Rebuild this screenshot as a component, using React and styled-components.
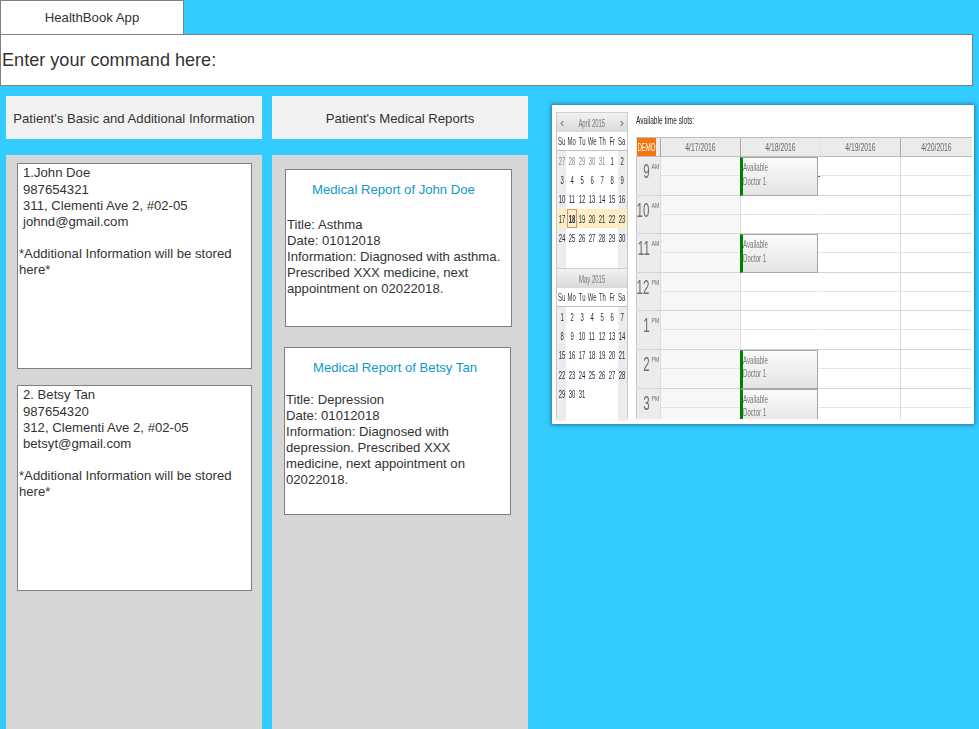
import React from 'react';
import styled, { createGlobalStyle } from 'styled-components';

const GlobalStyle = createGlobalStyle`
  html, body {
    margin: 0;
    height: 729px;
    overflow: hidden;
    background: #33ccff;
    font-family: "Liberation Sans", Arial, sans-serif;
    color: #333333;
  }
`;

const Page = styled.div`
  display: flex;
  flex-direction: column;
  height: 729px;
`;
const Tab = styled.div`
  width: 182px;
  height: 33px;
  background: #fff;
  border: 1px solid #7f7f7f;
  border-bottom: none;
  display: flex;
  align-items: center;
  justify-content: center;
  font-size: 13.2px;
`;
const CommandBar = styled.div`
  width: 970px;
  height: 50px;
  background: #fff;
  border: 1px solid #7f7f7f;
  display: flex;
  align-items: center;
  padding-left: 1px;
  font-size: 18.1px;
`;
const Main = styled.div`
  flex: 1;
  display: flex;
  padding: 10px 0 0 6px;
  min-height: 0;
`;
const Column = styled.div`
  width: 256px;
  margin-right: 10px;
  display: flex;
  flex-direction: column;
  gap: 16px;
`;
const ColumnHeader = styled.div`
  height: 42px;
  padding-top: 1px;
  background: #f2f2f2;
  display: flex;
  align-items: center;
  justify-content: center;
  font-size: 13.15px;
`;
const ColumnBody = styled.div`
  flex: 1;
  background: #d6d6d6;
  display: flex;
  flex-direction: column;
  padding: ${(p) => p.$pad};
  gap: ${(p) => p.$gap}px;
`;
const PatientCard = styled.div`
  width: 233px;
  height: 204px;
  background: #fff;
  border: 1px solid #7f7f7f;
  font-size: 13.15px;
  line-height: 16px;
`;
const Indented = styled.div`
  padding: 1px 0 0 5px;
`;
const NameLine = styled.div`
  margin-bottom: ${(p) => (p.$first ? 1 : 0)}px;
`;
const Note = styled.div`
  margin-top: 16px;
  padding-left: 1px;
`;
const ReportCard = styled.div`
  width: 224px;
  height: ${(p) => p.$height}px;
  margin-left: ${(p) => p.$shift}px;
  background: #fff;
  border: 1px solid #7f7f7f;
  font-size: 13.15px;
  line-height: 16px;
  padding-left: 1px;
`;
const ReportTitle = styled.div`
  color: #0e9ac8;
  height: 39px;
  padding-right: ${(p) => p.$inset}px;
  display: flex;
  align-items: center;
  justify-content: center;
`;
const ReportBody = styled.div`
  margin-top: ${(p) => p.$top}px;
`;

const Shot = styled.div`
  width: 422px;
  height: 319px;
  margin: 9px 0 0 14px;
  background: #fff;
  box-shadow: 0 0 4px 1px rgba(40, 90, 120, 0.75);
  display: flex;
  padding: 7px 0 0 4px;
  box-sizing: border-box;
  overflow: hidden;
  filter: blur(0.3px);
`;
const Nav = styled.div`
  width: 72px;
  height: 307px;
  box-sizing: border-box;
  border-left: 1px solid #c8c8c8;
  border-right: 1px solid #c8c8c8;
  display: flex;
  flex-direction: column;
`;
const NavTitle = styled.div`
  height: 20px;
  flex: none;
  background: linear-gradient(#f2f2f2, #d9d9d9);
  border-top: 1px solid #cfcfcf;
  box-sizing: border-box;
  display: flex;
  align-items: center;
  justify-content: center;
  color: #777;
  font-size: 11px;
  position: relative;
`;
const NavArrow = styled.span`
  position: absolute;
  top: 2px;
  font-size: 13px;
  ${(p) => p.$side}: 3px;
`;
const Squeeze = styled.span`
  display: inline-block;
  white-space: nowrap;
  transform: scaleX(${(p) => p.$x || 0.54});
  transform-origin: ${(p) => p.$origin || 'center'};
`;
const WeekHead = styled.div`
  display: grid;
  flex: none;
  grid-template-columns: repeat(7, minmax(0, 1fr));
  height: 18px;
  align-items: center;
  justify-items: center;
  border-bottom: 1px solid #c0c0c0;
  font-size: 11px;
  color: #333;
`;
const Days = styled.div`
  display: grid;
  flex: none;
  grid-template-columns: repeat(7, minmax(0, 1fr));
  grid-auto-rows: 19.3px;
  height: ${(p) => p.$height}px;
  background: linear-gradient(90deg, #ececec 9px, #fff 9px, #fff 61px, #ececec 61px);
`;
const Day = styled.div`
  display: flex;
  align-items: center;
  justify-content: center;
  min-width: 0;
  font-size: 11px;
  color: ${(p) => (p.$muted ? '#888' : '#1c2238')};
  font-weight: ${(p) => (p.$today ? 700 : 400)};
  background: ${(p) => (p.$week ? '#fbeec4' : 'transparent')};
  box-shadow: ${(p) => (p.$today ? 'inset 0 0 0 1px #e08a80' : 'none')};
`;
const Scheduler = styled.div`
  margin-left: 8px;
  width: 336px;
  height: 307px;
  overflow: hidden;
  display: flex;
  flex-direction: column;
`;
const SlotsLabel = styled.div`
  height: 25px;
  flex: none;
  box-sizing: border-box;
  padding-bottom: 10px;
  font-size: 11px;
  color: #222;
  display: flex;
  align-items: center;
`;
const Row = styled.div`
  display: grid;
  flex: none;
  grid-template-columns: 24px 80px 80px 80px 71px;
`;
const HeadRow = styled(Row)`
  height: 20px;
  background: #ebebeb;
  border-top: 1px solid #bdbdbd;
  border-bottom: 1px solid #bdbdbd;
  box-sizing: border-box;
`;
const Demo = styled.div`
  margin: 0 4px 0 1px;
  background: #f5760f;
  color: #fff;
  font-size: 11px;
  display: flex;
  align-items: center;
  justify-content: center;
  overflow: hidden;
`;
const DateCell = styled.div`
  border-left: 1px solid ${(p) => (p.$faint ? '#e2e2e2' : '#a9a9a9')};
  display: flex;
  align-items: center;
  justify-content: center;
  font-size: 11px;
  color: #666;
`;
const HourRow = styled(Row)`
  height: 38.6px;
  border-bottom: 1px solid #d4d4d4;
  box-sizing: border-box;
`;
const HourCell = styled.div`
  background: #ececec;
  color: #6e6e6e;
  border-left: 1px solid #c6c6c6;
  display: flex;
  justify-content: flex-end;
  padding: 4px 1px 0 0;
  font-size: 21px;
  line-height: 20px;
`;
const HourNumber = styled(Squeeze)`
  margin-right: -2px;
`;
const Meridiem = styled.span`
  font-size: 7.5px;
  line-height: 12px;
`;
const Slot = styled.div`
  position: relative;
  background: ${(p) => (p.$off ? '#f7f7f7' : '#fff')};
  border-left: 1px solid ${(p) => (p.$open ? 'transparent' : '#dcdcdc')};
  &::after {
    content: '';
    position: absolute;
    left: 0;
    right: 0;
    top: 18px;
    border-top: 1px solid #e3e3e3;
  }
`;
const Event = styled.div`
  position: absolute;
  z-index: 1;
  inset: 0 2px -1px -1px;
  background: linear-gradient(#fbfbfb, #e4e4e4);
  border: 1px solid #a6a6a6;
  border-left: 3px solid #008000;
  box-sizing: border-box;
  padding-top: 3px;
  font-size: 11px;
  line-height: 13.5px;
  color: #777;
`;
const EventLine = styled.div`
  transform: scaleX(0.56);
  transform-origin: left;
  white-space: nowrap;
`;
const NowMark = styled.div`
  position: absolute;
  z-index: 2;
  top: 19px;
  right: 0;
  width: 2px;
  height: 1px;
  background: #c03030;
`;

const patients = [
  { lines: ['1.John Doe', '987654321', '311, Clementi Ave 2, #02-05', 'johnd@gmail.com'] },
  { lines: ['2. Betsy Tan', '987654320', '312, Clementi Ave 2, #02-05', 'betsyt@gmail.com'] },
];
const weekDays = ['Su', 'Mo', 'Tu', 'We', 'Th', 'Fr', 'Sa'];
const april = [27, 28, 29, 30, 31, 1, 2, 3, 4, 5, 6, 7, 8, 9, 10, 11, 12, 13, 14, 15, 16, 17, 18, 19, 20, 21, 22, 23, 24, 25, 26, 27, 28, 29, 30];
const may = [...Array(31)].map((_, i) => i + 1);
const hours = [
  ['9', 'AM', true],
  ['10', 'AM', false],
  ['11', 'AM', true],
  ['12', 'PM', false],
  ['1', 'PM', false],
  ['2', 'PM', true],
  ['3', 'PM', true],
];

function Month({ title, days, arrows, height, first }) {
  return (
    <>
      <NavTitle>
        {arrows && <NavArrow $side="left">‹</NavArrow>}
        <Squeeze>{title}</Squeeze>
        {arrows && <NavArrow $side="right">›</NavArrow>}
      </NavTitle>
      <WeekHead>
        {weekDays.map((d) => (
          <Squeeze key={d}>{d}</Squeeze>
        ))}
      </WeekHead>
      <Days $height={height}>
        {days.map((d, i) => (
          <Day
            key={i}
            $muted={first && i < 5}
            $week={first && i >= 21 && i < 28}
            $today={first && i === 22}
          >
            <Squeeze>{d}</Squeeze>
          </Day>
        ))}
      </Days>
    </>
  );
}

export default function App() {
  return (
    <Page>
      <GlobalStyle />
      <Tab>HealthBook App</Tab>
      <CommandBar>Enter your command here:</CommandBar>
      <Main>
        <Column>
          <ColumnHeader>Patient's Basic and Additional Information</ColumnHeader>
          <ColumnBody $pad="8px 0 0 11px" $gap={16}>
            {patients.map((p) => (
              <PatientCard key={p.lines[0]}>
                <Indented>
                  {p.lines.map((l, i) => (
                    <NameLine key={l} $first={i === 0}>{l}</NameLine>
                  ))}
                </Indented>
                <Note>*Additional Information will be stored here*</Note>
              </PatientCard>
            ))}
          </ColumnBody>
        </Column>
        <Column>
          <ColumnHeader>Patient's Medical Reports</ColumnHeader>
          <ColumnBody $pad="14px 0 0 12px" $gap={20}>
            <ReportCard $height={156} $shift={1}>
              <ReportTitle $inset={11}>Medical Report of John Doe</ReportTitle>
              <ReportBody $top={8}>
                <div>Title: Asthma</div>
                <div>Date: 01012018</div>
                <div>Information: Diagnosed with asthma. Prescribed XXX medicine, next appointment on 02022018.</div>
              </ReportBody>
            </ReportCard>
            <ReportCard $height={166} $shift={0}>
              <ReportTitle $inset={6}>Medical Report of Betsy Tan</ReportTitle>
              <ReportBody $top={5}>
                <div>Title: Depression</div>
                <div>Date: 01012018</div>
                <div>Information: Diagnosed with depression. Prescribed XXX medicine, next appointment on 02022018.</div>
              </ReportBody>
            </ReportCard>
          </ColumnBody>
        </Column>
        <Shot>
          <Nav>
            <Month title="April 2015" days={april} arrows height={117} first />
            <Month title="May 2015" days={may} height={114} />
          </Nav>
          <Scheduler>
            <SlotsLabel><Squeeze $x={0.6} $origin="left">Available time slots:</Squeeze></SlotsLabel>
            <HeadRow>
              <Demo><Squeeze $x={0.55}>DEMO</Squeeze></Demo>
              <DateCell><Squeeze $x={0.62}>4/17/2016</Squeeze></DateCell>
              <DateCell><Squeeze $x={0.62}>4/18/2016</Squeeze></DateCell>
              <DateCell $faint><Squeeze $x={0.62}>4/19/2016</Squeeze></DateCell>
              <DateCell><Squeeze $x={0.62}>4/20/2016</Squeeze></DateCell>
            </HeadRow>
            {hours.map(([h, m, booked], i) => (
              <HourRow key={h}>
                <HourCell>
                  <HourNumber $x={0.55} $origin="right">{h}</HourNumber>
                  <Meridiem><Squeeze $x={0.7} $origin="right">{m}</Squeeze></Meridiem>
                </HourCell>
                <Slot $off />
                <Slot>
                  {booked && (
                    <Event>
                      <EventLine>Available</EventLine>
                      <EventLine>Doctor 1</EventLine>
                    </Event>
                  )}
                  {i === 0 && <NowMark />}
                </Slot>
                <Slot $open />
                <Slot />
              </HourRow>
            ))}
          </Scheduler>
        </Shot>
      </Main>
    </Page>
  );
}
